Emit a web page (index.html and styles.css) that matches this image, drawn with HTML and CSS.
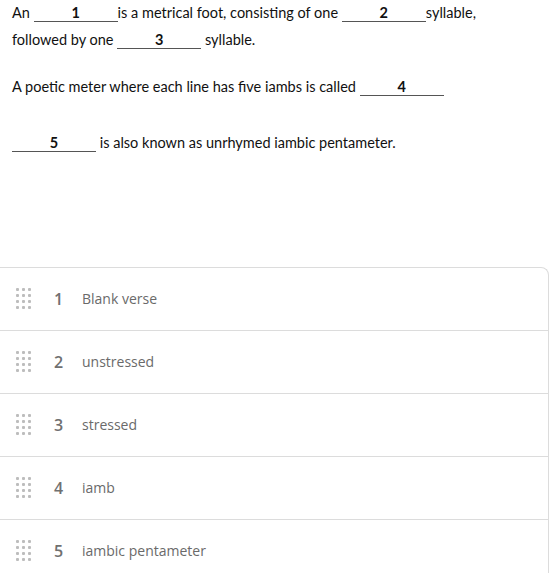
FILE: index.html
```html
<!DOCTYPE html>
<html>
<head>
<meta charset="utf-8">
<link rel="stylesheet" href="styles.css">
</head>
<body>
<div class="question">
  <p class="line first">An <span class="blank">1</span>is a metrical foot, consisting of one <span class="blank">2</span>syllable,<br>followed by one <span class="blank">3</span> syllable.</p>
  <p class="line second">A poetic meter where each line has five iambs is called <span class="blank">4</span></p>
  <p class="line third"><span class="blank">5</span> is also known as unrhymed iambic pentameter.</p>
</div>
<ul class="options">
  <li class="option"><span class="grip"><i></i><i></i><i></i><i></i><i></i><i></i><i></i><i></i><i></i><i></i><i></i><i></i></span><span class="num">1</span><span class="label">Blank verse</span></li>
  <li class="option"><span class="grip"><i></i><i></i><i></i><i></i><i></i><i></i><i></i><i></i><i></i><i></i><i></i><i></i></span><span class="num">2</span><span class="label">unstressed</span></li>
  <li class="option"><span class="grip"><i></i><i></i><i></i><i></i><i></i><i></i><i></i><i></i><i></i><i></i><i></i><i></i></span><span class="num">3</span><span class="label">stressed</span></li>
  <li class="option"><span class="grip"><i></i><i></i><i></i><i></i><i></i><i></i><i></i><i></i><i></i><i></i><i></i><i></i></span><span class="num">4</span><span class="label">iamb</span></li>
  <li class="option"><span class="grip"><i></i><i></i><i></i><i></i><i></i><i></i><i></i><i></i><i></i><i></i><i></i><i></i></span><span class="num">5</span><span class="label">iambic pentameter</span></li>
</ul>
</body>
</html>
```
FILE: styles.css
```css
html, body { margin: 0; padding: 0; background: #fff; }
body { width: 560px; height: 573px; overflow: hidden; }
.question {
  padding: 0 0 0 12px;
  font-family: Lato, "Liberation Sans", sans-serif;
  font-size: 14.5px;
  color: #111;
}
.line { margin: 0; line-height: 28px; }
.first { line-height: 27px; margin-top: -1px; }
.second { margin-top: 20px; }
.third { margin-top: 28px; }
.blank {
  display: inline-block;
  width: 84px;
  text-align: center;
  font-weight: bold;
  line-height: 16px;
  border-bottom: 1px solid #555;
}
.options {
  list-style: none;
  margin: 110px 0 0 0;
  padding: 0;
  width: 548px;
  border-top: 1px solid #dcdcdc;
  border-right: 1px solid #dcdcdc;
  border-top-right-radius: 8px;
}
.option {
  display: flex;
  align-items: center;
  height: 62px;
  border-bottom: 1px solid #dcdcdc;
  font-family: "Open Sans", sans-serif;
  font-size: 14px;
  color: #666;
}
.grip {
  display: grid;
  grid-template-columns: repeat(3, 3px);
  grid-auto-rows: 3px;
  gap: 3px;
  margin-left: 16px;
  width: 15px;
  margin-top: -1px;
}
.grip i { display: block; width: 3px; height: 3px; background: #bdbdbd; border-radius: 1px; }
.num { margin-left: 23px; font-weight: 600; font-size: 16px; color: #707070; width: 28px; margin-top: -1px; }
.label { color: #6a6a6a; margin-top: -1px; }
```
